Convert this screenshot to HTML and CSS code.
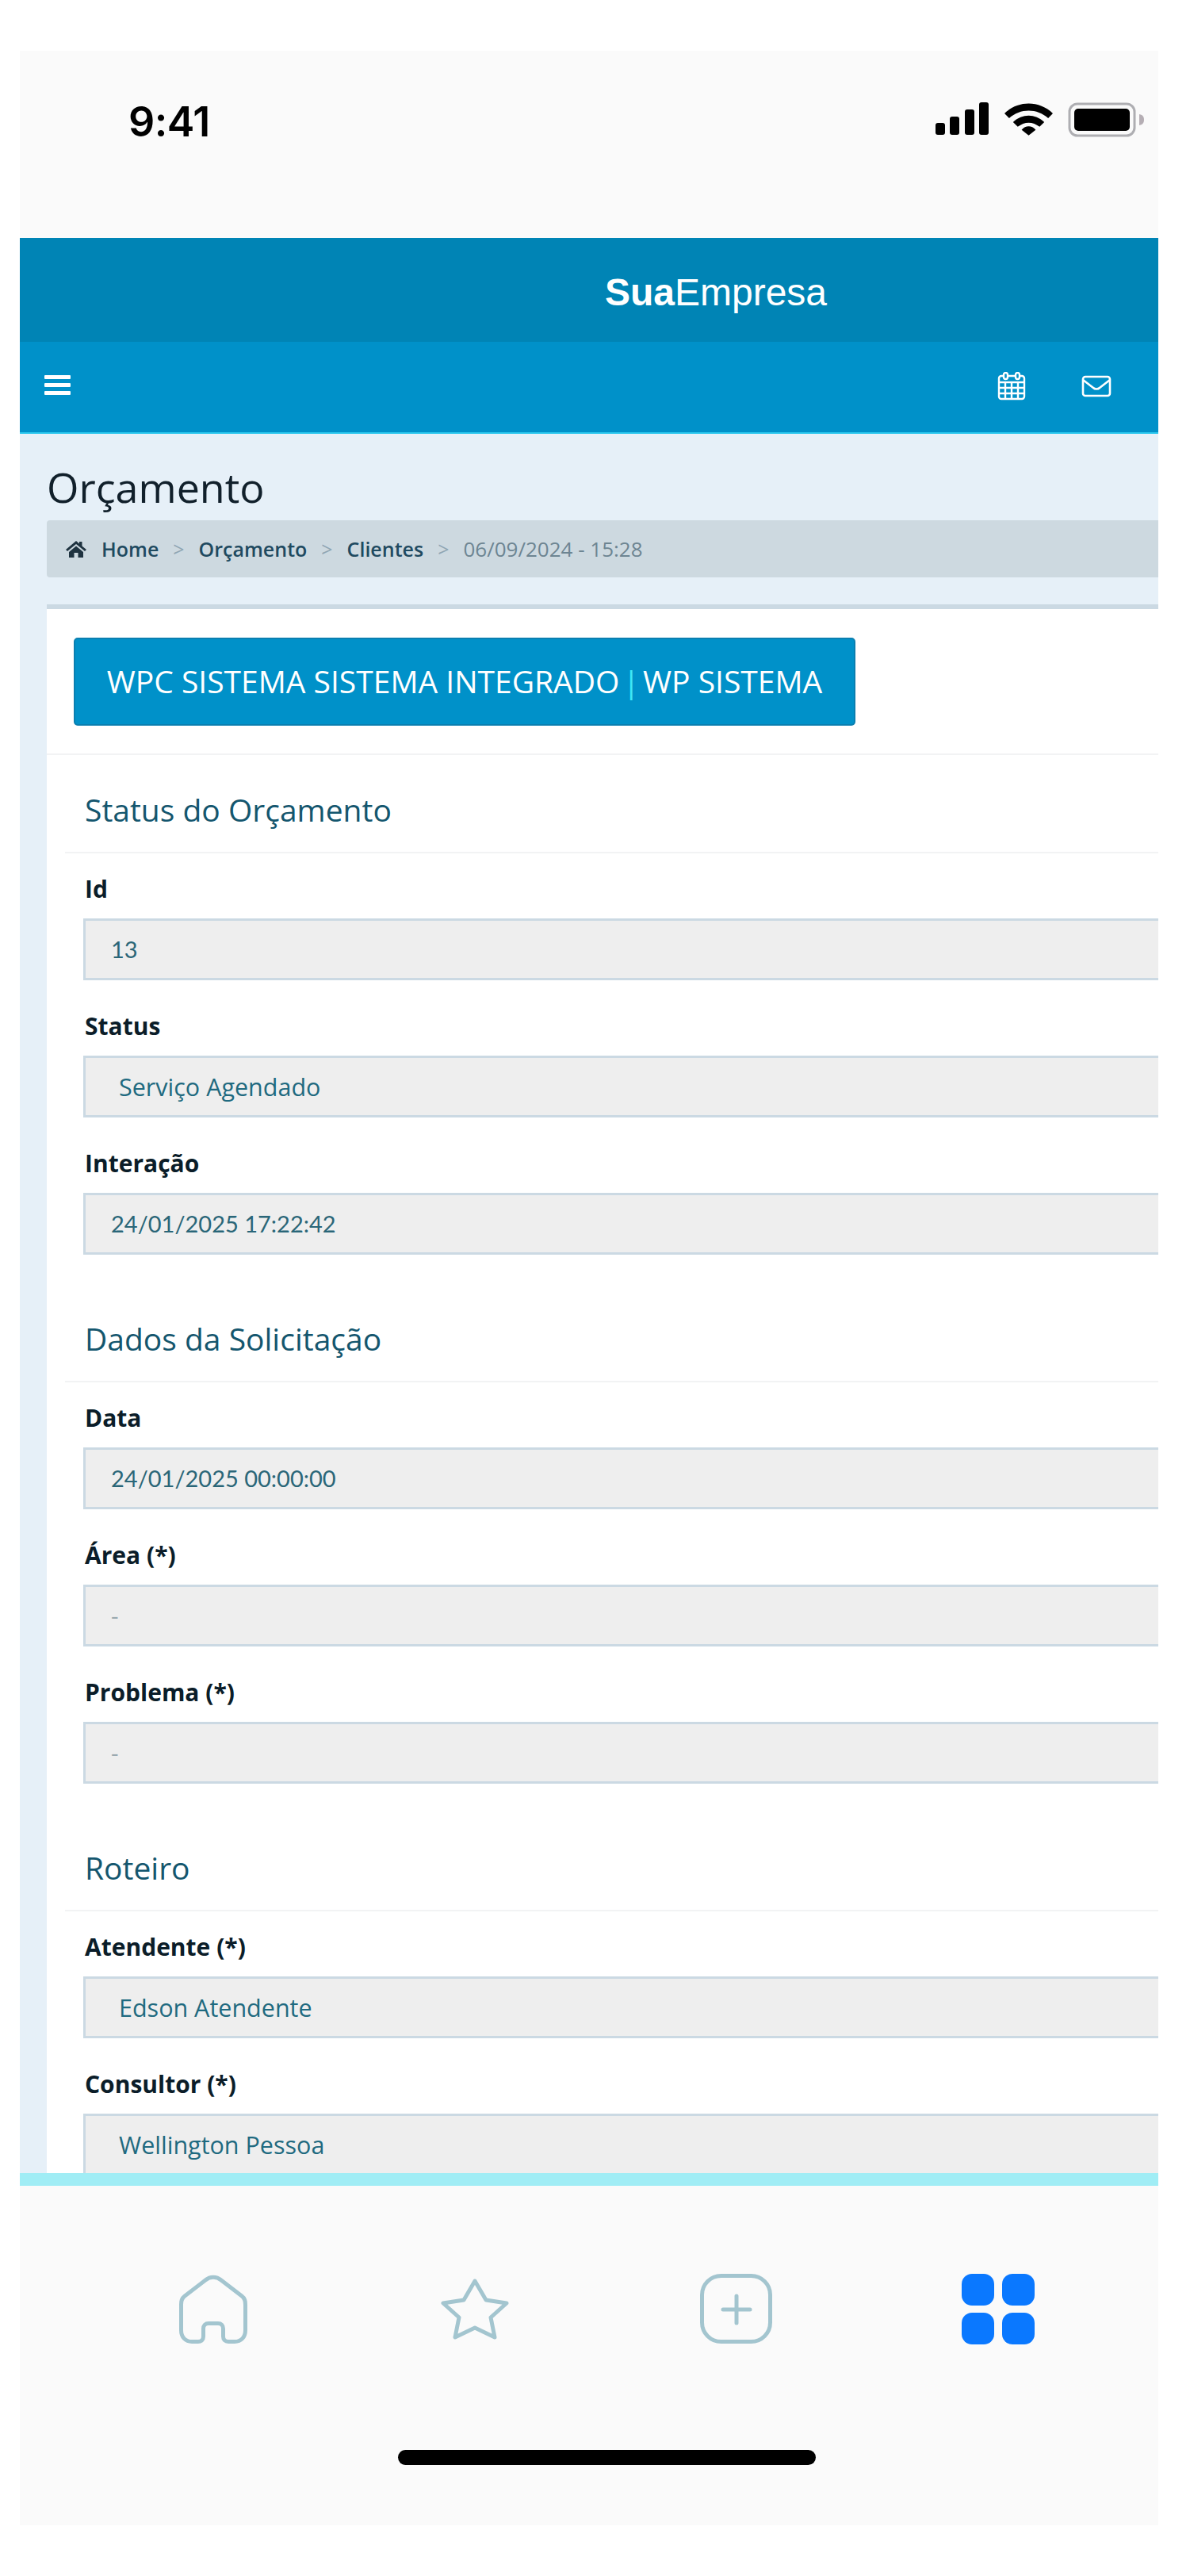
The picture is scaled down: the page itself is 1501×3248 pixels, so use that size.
FILE: index.html
```html
<!DOCTYPE html>
<html lang="pt-BR">
<head>
    <meta charset="UTF-8">
    <meta name="viewport" content="width=device-width, initial-scale=1.0">
    <title>Orçamento - SuaEmpresa</title>
    <link rel="stylesheet" href="styles.css">
</head>
<body>
    <div class="phone">
        <div class="status-bar">
            <span class="clock">9:41</span>
            <div class="status-icons">
                <svg width="68" height="42" viewBox="0 0 68 42"><rect x="0" y="26" width="12" height="15" rx="3"/><rect x="18" y="18" width="12" height="23" rx="3"/><rect x="37" y="9" width="12" height="32" rx="3"/><rect x="55" y="0" width="12" height="41" rx="3"/></svg>
                <svg width="61" height="42" viewBox="0 0 62 42"><path d="M0 14 C17 -3 45 -3 62 14 L56 20 C42 7 20 7 6 20 Z"/><path d="M11 25 C23 14 39 14 51 25 L45 31 C36 24 26 24 17 31 Z"/><path d="M22 35 C27 29 35 29 40 35 L31 42 Z"/></svg>
                <svg width="98" height="44" viewBox="0 0 98 44"><rect x="2" y="2" width="82" height="40" rx="10" fill="none" stroke="#aeaeb2" stroke-width="3"/><rect x="8" y="8" width="70" height="28" rx="5"/><path d="M90 15 C95 16 96 19 96 22 C96 25 95 28 90 29 Z" fill="#b5aeb4"/></svg>
            </div>
        </div>

        <div class="brand-bar"><span class="brand"><b>Sua</b>Empresa</span></div>

        <div class="nav-bar">
            <div class="menu-icon"><span></span><span></span><span></span></div>
            <div class="nav-icons">
                <svg width="36" height="36" viewBox="0 0 36 36" fill="none" stroke="#fff" stroke-width="2.4"><rect x="2" y="5" width="32" height="29" rx="3"/><path d="M2 13H34M10 13V34M18 13V34M26 13V34M2 20H34M2 27H34"/><rect x="8" y="1" width="5" height="8" rx="2.5" fill="#0091c9"/><rect x="23" y="1" width="5" height="8" rx="2.5" fill="#0091c9"/></svg>
                <svg width="38" height="28" viewBox="0 0 38 28" fill="none" stroke="#fff" stroke-width="2.6"><rect x="2" y="2" width="34" height="24" rx="3"/><path d="M2 6 L15 16 C17 18 21 18 23 16 L36 6"/></svg>
            </div>
        </div>

        <div class="page">
            <h1 class="page-title">Orçamento</h1>
            <div class="breadcrumb">
                <svg class="crumb-home" width="26" height="22" viewBox="0 0 26 22"><path d="M13 1 L17 4.5 V2 H20.5 V7.5 L26 12 L24 14 L13 5 L2 14 L0 12 Z"/><path d="M13 7.5 L22 15 V22 H15.5 V16 H10.5 V22 H4 V15 Z"/></svg>
                <a href="#">Home</a><span class="sep">&gt;</span>
                <a href="#">Orçamento</a><span class="sep">&gt;</span>
                <a href="#">Clientes</a><span class="sep">&gt;</span>
                <span class="crumb-date">06/09/2024 - 15:28</span>
            </div>

            <div class="card">
                <div class="card-top">
                    <a class="btn-title" href="#">WPC SISTEMA SISTEMA INTEGRADO <i>|</i> WP SISTEMA</a>
                </div>

                <div class="section">
                    <h2 class="section-title">Status do Orçamento</h2>
                    <div class="field">
                        <label>Id</label>
                        <div class="input num">13</div>
                    </div>
                    <div class="field">
                        <label>Status</label>
                        <div class="input select">Serviço Agendado</div>
                    </div>
                    <div class="field">
                        <label>Interação</label>
                        <div class="input num">24/01/2025 17:22:42</div>
                    </div>
                </div>

                <div class="section">
                    <h2 class="section-title">Dados da Solicitação</h2>
                    <div class="field">
                        <label>Data</label>
                        <div class="input num">24/01/2025 00:00:00</div>
                    </div>
                    <div class="field">
                        <label>Área (*)</label>
                        <div class="input muted">-</div>
                    </div>
                    <div class="field">
                        <label>Problema (*)</label>
                        <div class="input muted">-</div>
                    </div>
                </div>

                <div class="section">
                    <h2 class="section-title">Roteiro</h2>
                    <div class="field">
                        <label>Atendente (*)</label>
                        <div class="input select">Edson Atendente</div>
                    </div>
                    <div class="field">
                        <label>Consultor (*)</label>
                        <div class="input select">Wellington Pessoa</div>
                    </div>
                </div>
            </div>
        </div>

        <div class="tab-bar">
            <div class="tabs">
                <svg class="tab-home" width="86" height="87" viewBox="0 0 86 87" fill="none" stroke-width="5"><path d="M33 7 C39 2 47 2 53 7 L79 27 C83 30 83.5 33 83.5 38 V70 C83.5 79 78 84.5 70 84.5 H62 C58 84.5 55.5 82 55.5 78 V68 C55.5 64 53 61.5 49 61.5 H37 C33 61.5 30.5 64 30.5 68 V78 C30.5 82 28 84.5 24 84.5 H16 C8 84.5 2.5 79 2.5 70 V38 C2.5 33 3 30 7 27 Z"/></svg>
                <svg class="tab-star" width="86" height="79" viewBox="0 0 86 79" fill="none" stroke-width="5" stroke-linejoin="round"><path d="M43 4 L57 28 L83 32 L63 50 L68 75 L43 63 L18 75 L23 50 L3 32 L29 28 Z"/></svg>
                <svg class="tab-add" width="91" height="88" viewBox="0 0 91 88" fill="none" stroke-width="5" stroke-linecap="round"><rect x="2.5" y="2.5" width="86" height="83" rx="24"/><path d="M46 28V62M29 45H63"/></svg>
                <div class="apps-icon"><span></span><span></span><span></span><span></span></div>
            </div>
            <div class="home-indicator"></div>
        </div>
    </div>
</body>
</html>
```

FILE: styles.css
```css
* {
    box-sizing: border-box;
}

body {
    margin: 0;
    background-color: #fff;
    font-family: "Open Sans", "Noto Sans", sans-serif;
}

.phone {
    display: flex;
    flex-direction: column;
    width: 1436px;
    height: 3120px;
    margin: 64px 0 0 25px;
    overflow: hidden;
    background-color: #fafafa;
}

/* status bar */
.status-bar {
    display: flex;
    justify-content: space-between;
    height: 236px;
    flex: none;
    padding: 65px 16px 0 137px;
}

.clock {
    margin-top: -5px;
    font-family: Inter, "Liberation Sans", sans-serif;
    font-size: 52px;
    line-height: 60px;
    font-weight: 600;
    letter-spacing: -0.5px;
    color: #000;
}

.status-icons {
    display: flex;
    gap: 19px;
    height: 44px;
}

/* header */
.brand-bar {
    display: flex;
    justify-content: center;
    align-items: center;
    flex: none;
    height: 131px;
    padding: 5px 0 0 320px;
    background-color: #0084b5;
}

.brand {
    font-family: "Liberation Sans", Arial, sans-serif;
    font-size: 48px;
    color: #fff;
}

.nav-bar {
    display: flex;
    justify-content: space-between;
    align-items: center;
    flex: none;
    height: 116px;
    padding: 0 59px 0 31px;
    background-color: #0091c9;
    border-bottom: 2px solid #2bc8ee;
}

.menu-icon {
    display: flex;
    flex-direction: column;
    gap: 5px;
    width: 33px;
    margin-bottom: 5px;
}

.menu-icon span {
    height: 5px;
    background-color: #fff;
    border-radius: 1px;
}

.nav-icons {
    display: flex;
    align-items: center;
    gap: 70px;
    margin-bottom: 2px;
}

/* page */
.page {
    flex: 1;
    min-height: 0;
    overflow: hidden;
    padding: 33px 0 0 34px;
    background-color: #e6f0f8;
}

.page-title {
    margin: 0 0 8px;
    font-size: 52px;
    line-height: 68px;
    font-weight: normal;
    color: #11202b;
}

.breadcrumb {
    display: flex;
    align-items: center;
    height: 72px;
    width: 1500px;
    padding-left: 24px;
    border-radius: 4px;
    background-color: #cdd9e0;
    font-size: 25px;
    color: #1f3f52;
}

.crumb-home {
    margin-right: 19px;
    fill: #1f3340;
}

.breadcrumb a {
    color: #1f4a60;
    font-weight: 600;
    text-decoration: none;
}

.sep {
    margin: 0 18px;
    color: #8fa5b3;
}

.crumb-date {
    font-size: 26px;
    color: #6d8592;
}

.card {
    width: 1500px;
    margin-top: 34px;
    border-top: 6px solid #cbd9e3;
    background-color: #fff;
}

.card-top {
    padding: 36px 0 35px 34px;
    border-bottom: 2px solid #f2f3f4;
}

.btn-title {
    display: block;
    width: 986px;
    height: 111px;
    border-radius: 5px;
    border: 2px solid #0a7fb0;
    background-color: #0091c9;
    color: #fff;
    font-size: 39px;
    line-height: 105px;
    text-align: center;
    text-decoration: none;
}

.btn-title i {
    margin: 0 -6px;
    font-style: normal;
    color: #3fe7f5;
}

.section {
    padding: 0 0 0 23px;
    margin-bottom: 37px;
}

.section-title {
    margin: 0 0 27px;
    padding: 43px 0 27px 25px;
    border-bottom: 2px solid #f2f3f4;
    font-size: 39px;
    line-height: 52px;
    font-weight: normal;
    color: #14566e;
}

.field {
    margin-bottom: 40px;
    padding-left: 23px;
}

.field:last-child {
    margin-bottom: 0;
}

.field label {
    display: block;
    margin-bottom: 18px;
    height: 37px;
    padding-left: 2px;
    font-size: 30px;
    line-height: 36px;
    font-weight: bold;
    color: #0b1d29;
}

.input {
    height: 78px;
    padding-left: 32px;
    border: 3px solid #cbd9e3;
    background-color: #eeeeee;
    font-size: 29.5px;
    line-height: 72px;
    color: #1f6a80;
}

.input.select {
    padding-left: 42px;
    font-size: 30.5px;
}

.input.num {
    font-family: Lato, "Open Sans", sans-serif;
    font-size: 29px;
    color: #2a6678;
}

.input.muted {
    color: #9aa9b0;
}

/* tab bar */
.tab-bar {
    flex: none;
    height: 444px;
    background-color: #fafafa;
    border-top: 16px solid #a0edf5;
}

.tabs {
    display: flex;
    align-items: center;
    height: 200px;
    padding: 110px 0 0 201px;
}

.tabs svg {
    stroke: #a3c5cf;
}

.tab-home {
    margin-right: 244px;
}

.tab-star {
    margin-right: 241px;
}

.tab-add {
    margin-right: 239px;
}

.apps-icon {
    display: grid;
    grid-template-columns: 41px 41px;
    grid-auto-rows: 40px;
    gap: 9px 10px;
}

.apps-icon span {
    background-color: #0a78ff;
    border-radius: 13px;
}

.home-indicator {
    width: 527px;
    height: 19px;
    margin: 133px 0 0 477px;
    border-radius: 10px;
    background-color: #000;
}
```
